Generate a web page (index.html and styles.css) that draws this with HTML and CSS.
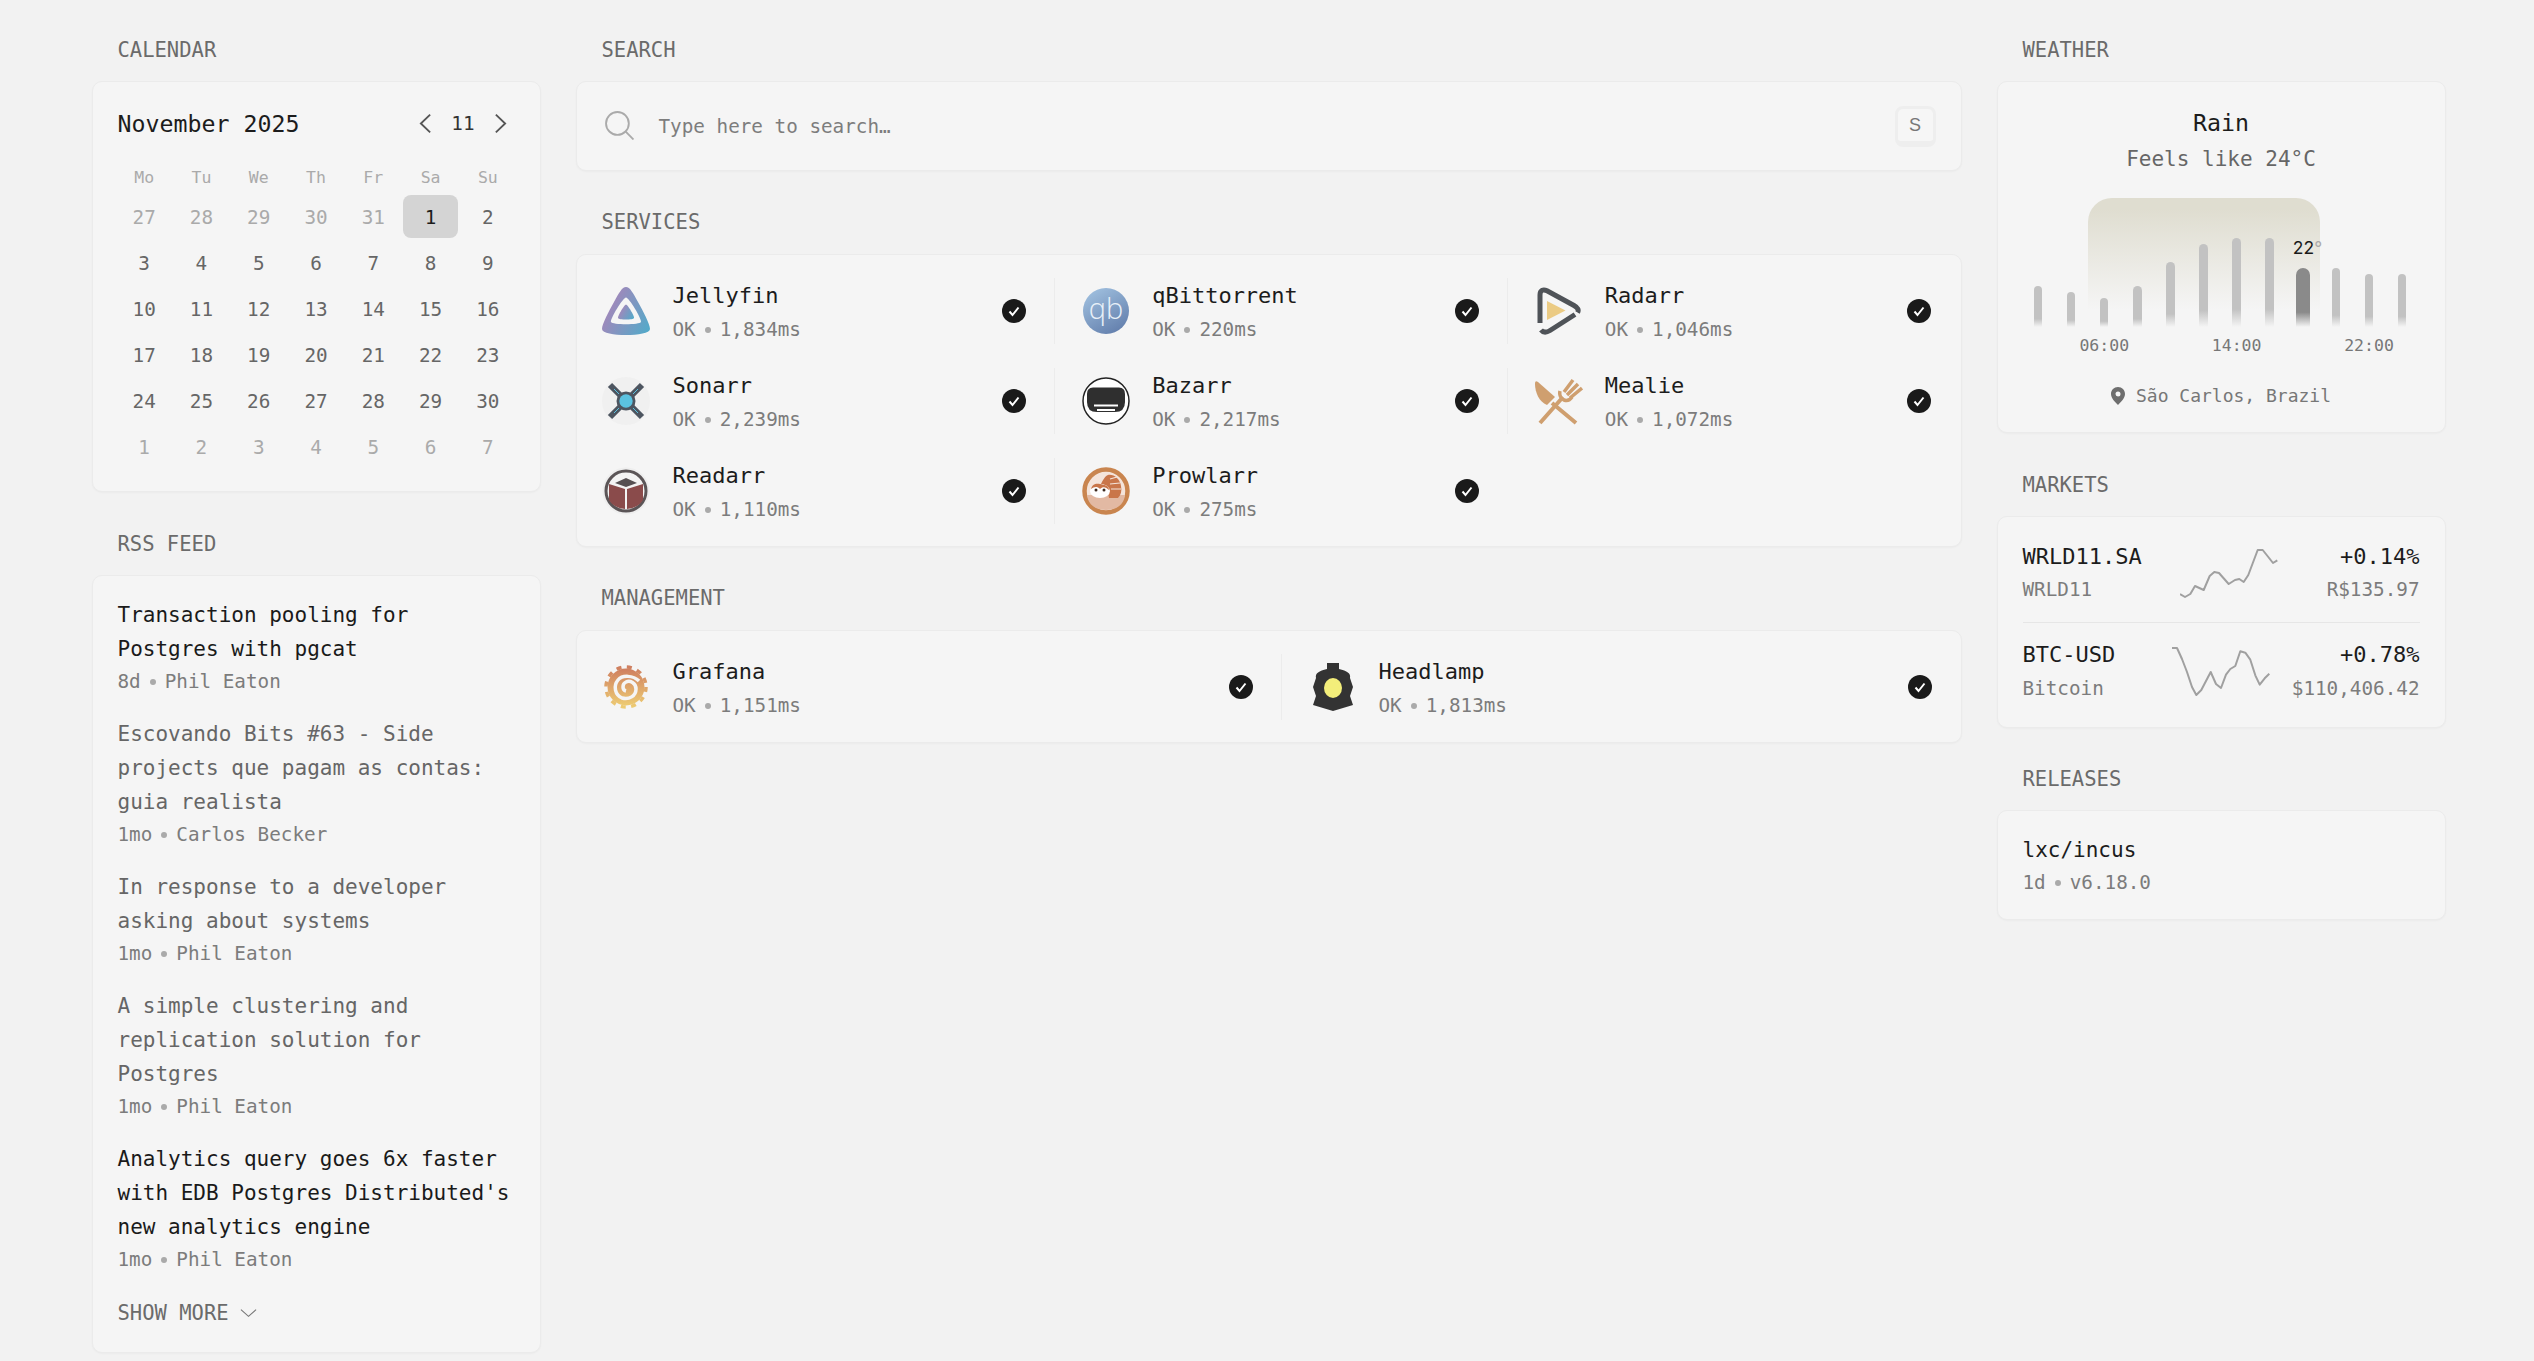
FILE: index.html
```html
<!DOCTYPE html>
<html lang="en">
<head>
    <meta charset="UTF-8">
    <meta name="viewport" content="width=device-width, initial-scale=1.0">
    <title>Dashboard</title>
    <link rel="stylesheet" href="styles.css">
</head>
<body>
    <div class="page">
        <!-- Left column -->
        <div class="column">
            <section class="section">
                <h2 class="section-title">CALENDAR</h2>
                <div class="card calendar">
                    <div class="calendar-header">
                        <span class="calendar-month">November 2025</span>
                        <div class="calendar-nav">
                            <svg class="nav-arrow" viewBox="0 0 14 22"><path d="M12 1.5 2 11l10 9.5"/></svg>
                            <span>11</span>
                            <svg class="nav-arrow" viewBox="0 0 14 22"><path d="M2 1.5 12 11 2 20.500"/></svg>
                        </div>
                    </div>
                    <div class="calendar-grid">
                        <span class="weekday">Mo</span><span class="weekday">Tu</span><span class="weekday">We</span><span class="weekday">Th</span><span class="weekday">Fr</span><span class="weekday">Sa</span><span class="weekday">Su</span>
                        <span class="day muted">27</span><span class="day muted">28</span><span class="day muted">29</span><span class="day muted">30</span><span class="day muted">31</span><span class="day today">1</span><span class="day">2</span>
                        <span class="day">3</span><span class="day">4</span><span class="day">5</span><span class="day">6</span><span class="day">7</span><span class="day">8</span><span class="day">9</span>
                        <span class="day">10</span><span class="day">11</span><span class="day">12</span><span class="day">13</span><span class="day">14</span><span class="day">15</span><span class="day">16</span>
                        <span class="day">17</span><span class="day">18</span><span class="day">19</span><span class="day">20</span><span class="day">21</span><span class="day">22</span><span class="day">23</span>
                        <span class="day">24</span><span class="day">25</span><span class="day">26</span><span class="day">27</span><span class="day">28</span><span class="day">29</span><span class="day">30</span>
                        <span class="day muted">1</span><span class="day muted">2</span><span class="day muted">3</span><span class="day muted">4</span><span class="day muted">5</span><span class="day muted">6</span><span class="day muted">7</span>
                    </div>
                </div>
            </section>

            <section class="section">
                <h2 class="section-title">RSS FEED</h2>
                <div class="card feed">
                    <article class="feed-item">
                        <div class="feed-title unread">Transaction pooling for Postgres with pgcat</div>
                        <div class="meta">8d<span class="dot"></span>Phil Eaton</div>
                    </article>
                    <article class="feed-item">
                        <div class="feed-title">Escovando Bits #63 - Side projects que pagam as contas: guia realista</div>
                        <div class="meta">1mo<span class="dot"></span>Carlos Becker</div>
                    </article>
                    <article class="feed-item">
                        <div class="feed-title">In response to a developer asking about systems</div>
                        <div class="meta">1mo<span class="dot"></span>Phil Eaton</div>
                    </article>
                    <article class="feed-item">
                        <div class="feed-title">A simple clustering and replication solution for Postgres</div>
                        <div class="meta">1mo<span class="dot"></span>Phil Eaton</div>
                    </article>
                    <article class="feed-item">
                        <div class="feed-title unread">Analytics query goes 6x faster with EDB Postgres Distributed's new analytics engine</div>
                        <div class="meta">1mo<span class="dot"></span>Phil Eaton</div>
                    </article>
                    <div class="show-more">SHOW MORE
                        <svg viewBox="0 0 18 10"><path d="M1 1.500 9 8.500l8-7"/></svg>
                    </div>
                </div>
            </section>
        </div>

        <!-- Middle column -->
        <div class="column">
            <section class="section">
                <h2 class="section-title">SEARCH</h2>
                <div class="card search">
                    <svg class="search-icon" viewBox="0 0 28 28"><circle cx="12" cy="12" r="11"/><path d="m20 20 7.500 7.500"/></svg>
                    <span class="search-text">Type here to search…</span>
                    <span class="key">S</span>
                </div>
            </section>

            <section class="section">
                <h2 class="section-title">SERVICES</h2>
                <div class="card services three">
                    <div class="service">
                        <svg class="service-icon" viewBox="0 0 48 48">
                            <defs><linearGradient id="jf" x1="0" y1="0.300" x2="1" y2="0.800"><stop offset="0" stop-color="#ae82b8"/><stop offset="1" stop-color="#55a9c9"/></linearGradient></defs>
                            <path fill="url(#jf)" fill-rule="evenodd" d="M24 0C20 0 17 6 12 15 7 24 0 37 0 42c0 4 12 6 24 6s24-2 24-6c0-5-7-18-12-27C31 6 28 0 24 0ZM24 10.500C27 10.500 40 32 39 35 38 38 10 38 9 35 8 32 21 10.500 24 10.500Z"/>
                            <path fill="url(#jf)" d="M24 17.500c-1.500 0-8.500 11.500-8 13.500 .5 2 15.500 2 16 0 .5-2-6.500-13.500-8-13.500Z"/>
                        </svg>
                        <div class="service-text"><div class="service-name">Jellyfin</div><div class="meta">OK<span class="dot"></span>1,834ms</div></div>
                        <svg class="check" viewBox="0 0 24 24"><circle cx="12" cy="12" r="12"/><path d="m7.500 12.500 3 3.500 6-7.500"/></svg>
                    </div>
                    <div class="service">
                        <svg class="service-icon" viewBox="0 0 48 48">
                            <defs><linearGradient id="qb" x1="0.200" y1="0" x2="0.800" y2="1"><stop offset="0" stop-color="#a0c0df"/><stop offset="1" stop-color="#617dab"/></linearGradient></defs>
                            <circle cx="24" cy="24" r="23" fill="url(#qb)"/>
                            <text class="qb-text" x="24" y="32" text-anchor="middle">qb</text>
                        </svg>
                        <div class="service-text"><div class="service-name">qBittorrent</div><div class="meta">OK<span class="dot"></span>220ms</div></div>
                        <svg class="check" viewBox="0 0 24 24"><circle cx="12" cy="12" r="12"/><path d="m7.500 12.500 3 3.500 6-7.500"/></svg>
                    </div>
                    <div class="service">
                        <svg class="service-icon" viewBox="0 0 48 48">
                            <path fill="#ebcb84" d="M12 14 30.500 23.500 12 33Z"/>
                            <path fill="none" stroke="#4f5358" stroke-width="5" d="M5 36V8C5 3.500 8 1.800 12 3.800L39 18.500C43 20.800 44 23 42.500 25.500"/>
                            <path fill="none" stroke="#4f5358" stroke-width="5" d="M40 27.500 15 43.500C11 46 8 45.500 6 43"/>
                        </svg>
                        <div class="service-text"><div class="service-name">Radarr</div><div class="meta">OK<span class="dot"></span>1,046ms</div></div>
                        <svg class="check" viewBox="0 0 24 24"><circle cx="12" cy="12" r="12"/><path d="m7.500 12.500 3 3.500 6-7.500"/></svg>
                    </div>
                    <div class="service">
                        <svg class="service-icon" viewBox="0 0 48 48">
                            <circle cx="24" cy="24" r="24" fill="#f0f0f0"/>
                            <path stroke="#4d5560" stroke-width="6" d="M8 8 40 40M40 8 8 40"/>
                            <circle cx="24" cy="24" r="9.500" fill="#4d5560"/>
                            <path stroke="#5bc2e0" stroke-width="1" d="M12 12 17 17M36 12 31 17M12 36 17 31M36 36 31 31"/>
                            <circle cx="24" cy="24" r="6.700" fill="#5bc2e0"/>
                        </svg>
                        <div class="service-text"><div class="service-name">Sonarr</div><div class="meta">OK<span class="dot"></span>2,239ms</div></div>
                        <svg class="check" viewBox="0 0 24 24"><circle cx="12" cy="12" r="12"/><path d="m7.500 12.500 3 3.500 6-7.500"/></svg>
                    </div>
                    <div class="service">
                        <svg class="service-icon" viewBox="0 0 48 48">
                            <circle cx="24" cy="24" r="23" fill="#fff" stroke="#222" stroke-width="1.500"/>
                            <path fill="#2f2f2f" d="M11 10.500H37Q43 10.500 43 17V25Q43 35 33 35H15Q5 35 5 25V17Q5 10.500 11 10.500Z"/>
                            <path stroke="#fff" stroke-width="2" d="M12 28.500H36M15 33H33"/>
                        </svg>
                        <div class="service-text"><div class="service-name">Bazarr</div><div class="meta">OK<span class="dot"></span>2,217ms</div></div>
                        <svg class="check" viewBox="0 0 24 24"><circle cx="12" cy="12" r="12"/><path d="m7.500 12.500 3 3.500 6-7.500"/></svg>
                    </div>
                    <div class="service">
                        <svg class="service-icon" viewBox="0 0 48 48">
                            <path fill="#cf9f6f" d="M0 7C0 4 1 3.500 3 5L20 20 12 28C4 25 0 15 0 7Z"/>
                            <path fill="none" stroke="#cf9f6f" stroke-width="4" d="M17 26 41 46M5 46 28 20"/>
                            <path fill="none" stroke="#cf9f6f" stroke-width="3.500" d="M25 14C24 18 26 22 29 23 32 24 35 23 37 20M29 15 38 3M32 18 43 7M35 21 47 11"/>
                        </svg>
                        <div class="service-text"><div class="service-name">Mealie</div><div class="meta">OK<span class="dot"></span>1,072ms</div></div>
                        <svg class="check" viewBox="0 0 24 24"><circle cx="12" cy="12" r="12"/><path d="m7.500 12.500 3 3.500 6-7.500"/></svg>
                    </div>
                    <div class="service">
                        <svg class="service-icon" viewBox="0 0 48 48">
                            <circle cx="24" cy="24" r="23.500" fill="#eeeeee"/>
                            <circle cx="24" cy="24" r="20" fill="#f3f3f3" stroke="#5b5557" stroke-width="3"/>
                            <path fill="#565052" d="M13 16 24 11 35 16 24 20Z"/>
                            <path fill="#8a4b4b" d="M7 17 23 22V42C15 41 10 38 7 33ZM41 17 25 22V42C33 41 38 38 41 33Z"/>
                        </svg>
                        <div class="service-text"><div class="service-name">Readarr</div><div class="meta">OK<span class="dot"></span>1,110ms</div></div>
                        <svg class="check" viewBox="0 0 24 24"><circle cx="12" cy="12" r="12"/><path d="m7.500 12.500 3 3.500 6-7.500"/></svg>
                    </div>
                    <div class="service">
                        <svg class="service-icon" viewBox="0 0 48 48">
                            <circle cx="24" cy="24" r="21.500" fill="#f4e4da" stroke="#c9854f" stroke-width="4.500"/>
                            <path fill="#e2b9a3" d="M5 28H43C42 38 34 43 24 43S6 38 5 28Z"/>
                            <path fill="#c9764a" d="M26 8C32 7 38 12 39 19 40 24 39 28 36 31H27L25 19 19 17C21 13 23 9 26 8Z"/>
                            <path stroke="#f4e4da" stroke-width="1.200" d="M28 12 35 10M28 17 38 16M29 22 39 22"/>
                            <ellipse cx="18" cy="24" rx="10" ry="7" fill="#fff"/>
                            <path fill="#c9764a" d="M9 22C10 17 14 16 18 17S27 18 27 23C24 20 21 19 18 22 15 19 12 20 9 22Z"/>
                            <circle cx="14" cy="23" r="1.500" fill="#3d2a1f"/>
                            <circle cx="22" cy="23" r="1.500" fill="#3d2a1f"/>
                        </svg>
                        <div class="service-text"><div class="service-name">Prowlarr</div><div class="meta">OK<span class="dot"></span>275ms</div></div>
                        <svg class="check" viewBox="0 0 24 24"><circle cx="12" cy="12" r="12"/><path d="m7.500 12.500 3 3.500 6-7.500"/></svg>
                    </div>
                </div>
            </section>

            <section class="section">
                <h2 class="section-title">MANAGEMENT</h2>
                <div class="card services two">
                    <div class="service">
                        <svg class="service-icon" viewBox="0 0 48 48">
                            <defs><linearGradient id="gf" x1="0" y1="0" x2="0" y2="1"><stop offset="0" stop-color="#cf7f60"/><stop offset="1" stop-color="#edcb73"/></linearGradient></defs>
                            <circle cx="24" cy="24" r="18.500" fill="url(#gf)"/>
                            <circle cx="24" cy="24" r="20" fill="none" stroke="url(#gf)" stroke-width="3.500" stroke-dasharray="5 5.500"/>
                            <path fill="none" stroke="#f5f5f5" stroke-width="3.500" d="M37 18C31 12 20 12 16 17 11 23 13 32 20 35 27 37 34 33 34 26 34 20 28 17 24 19 20 21 20 27 24 28"/>
                        </svg>
                        <div class="service-text"><div class="service-name">Grafana</div><div class="meta">OK<span class="dot"></span>1,151ms</div></div>
                        <svg class="check" viewBox="0 0 24 24"><circle cx="12" cy="12" r="12"/><path d="m7.500 12.500 3 3.500 6-7.500"/></svg>
                    </div>
                    <div class="service">
                        <svg class="service-icon" viewBox="0 0 48 48">
                            <path fill="#333333" d="M18 0H30V6C38 8 42 10 41 15L44 24 41 33 44 42 24 48 4 42 7 33 4 24 7 15C6 10 10 8 18 6Z"/>
                            <ellipse cx="24" cy="25" rx="9" ry="10" fill="#f3ee7a"/>
                        </svg>
                        <div class="service-text"><div class="service-name">Headlamp</div><div class="meta">OK<span class="dot"></span>1,813ms</div></div>
                        <svg class="check" viewBox="0 0 24 24"><circle cx="12" cy="12" r="12"/><path d="m7.500 12.500 3 3.500 6-7.500"/></svg>
                    </div>
                </div>
            </section>
        </div>

        <!-- Right column -->
        <div class="column">
            <section class="section">
                <h2 class="section-title">WEATHER</h2>
                <div class="card weather">
                    <div class="weather-main">Rain</div>
                    <div class="weather-feels">Feels like 24°C</div>
                    <div class="chart">
                        <div class="daylight"></div>
                        <div class="bar-slot"><div class="bar h41"></div></div>
                        <div class="bar-slot"><div class="bar h35"></div></div>
                        <div class="bar-slot"><div class="bar h29"></div></div>
                        <div class="bar-slot"><div class="bar h41"></div></div>
                        <div class="bar-slot"><div class="bar h65"></div></div>
                        <div class="bar-slot"><div class="bar h83"></div></div>
                        <div class="bar-slot"><div class="bar h89"></div></div>
                        <div class="bar-slot"><div class="bar h89"></div></div>
                        <div class="bar-slot"><div class="bar now h59"><span class="bar-label">22<span class="degree">°</span></span></div></div>
                        <div class="bar-slot"><div class="bar h59"></div></div>
                        <div class="bar-slot"><div class="bar h53"></div></div>
                        <div class="bar-slot"><div class="bar h53"></div></div>
                    </div>
                    <div class="hours">
                        <span class="hour-a">06:00</span>
                        <span class="hour-b">14:00</span>
                        <span class="hour-c">22:00</span>
                    </div>
                    <div class="location">
                        <svg viewBox="0 0 14 18"><path fill-rule="evenodd" d="M7 0C3 0 0 3 0 7C0 11 4 15 7 18 10 15 14 11 14 7 14 3 11 0 7 0ZM7 4.500A2.500 2.500 0 1 1 7 9.500 2.500 2.500 0 0 1 7 4.500Z"/></svg>
                        São Carlos, Brazil
                    </div>
                </div>
            </section>

            <section class="section markets-section">
                <h2 class="section-title">MARKETS</h2>
                <div class="card markets">
                    <div class="market">
                        <div class="market-side">
                            <div class="market-name">WRLD11.SA</div>
                            <div class="meta">WRLD11</div>
                        </div>
                        <svg class="spark spark-first" viewBox="0 0 98 49"><polyline points="0,45 5,48 10.300,45 15,37 23.700,41 29.700,27 34.300,23 39,24 48.700,35 55,31 59.300,30 63.700,33 68.300,26 77.700,1 82.700,1 88.300,8 93,14 97.300,11.300"/></svg>
                        <div class="market-side right">
                            <div class="market-name">+0.14%</div>
                            <div class="meta">R$135.97</div>
                        </div>
                    </div>
                    <div class="market">
                        <div class="market-side">
                            <div class="market-name">BTC-USD</div>
                            <div class="meta">Bitcoin</div>
                        </div>
                        <svg class="spark" viewBox="0 0 98 49"><polyline points="0,1 5,1 10,12 15,25 20,40 24.300,48 29.300,43 38.700,25 44,37 49,41 54,27.700 58.300,22 63.300,19 68.300,4.300 73.300,5.700 78.300,12.700 83.300,28.300 87.700,37.700 92.700,31.300 97.300,26.700"/></svg>
                        <div class="market-side right">
                            <div class="market-name">+0.78%</div>
                            <div class="meta">$110,406.42</div>
                        </div>
                    </div>
                </div>
            </section>

            <section class="section">
                <h2 class="section-title">RELEASES</h2>
                <div class="card release">
                    <div class="release-name">lxc/incus</div>
                    <div class="meta">1d<span class="dot"></span>v6.18.0</div>
                </div>
            </section>
        </div>
    </div>
</body>
</html>
```
FILE: styles.css
```css
* {
    box-sizing: border-box;
    margin: 0;
    padding: 0;
}

body {
    font-family: "DejaVu Sans Mono", "Liberation Mono", monospace;
    font-size: 21px;
    background-color: #f2f2f2;
    color: #1c1c1c;
}

.page {
    display: grid;
    grid-template-columns: 449px 1fr 449px;
    column-gap: 35px;
    padding: 37.5px 88.5px 0 91.5px;
}

.section {
    margin-bottom: 39.5px;
}

.section-title {
    font-size: 20.500px;
    font-weight: 400;
    line-height: 24px;
    color: #6b6b6b;
    padding-left: 26px;
    margin-bottom: 19.5px;
}

.card {
    background-color: #f5f5f5;
    border: 1px solid #ebebeb;
    border-radius: 10px;
    box-shadow: 0 1px 2px rgba(0,0,0,0.03);
}

.meta {
    font-size: 19.300px;
    line-height: 32px;
    color: #7c7c7c;
}

.dot {
    display: inline-block;
    width: 6px;
    height: 6px;
    margin: 0 9px;
    border-radius: 50%;
    background-color: #aaa;
    vertical-align: 3px;
}

/* Calendar */
.calendar {
    padding: 23px 23px 23px;
}

.calendar-header {
    display: flex;
    justify-content: space-between;
    align-items: center;
    height: 36px;
    margin-bottom: 24px;
}

.calendar-month {
    font-size: 23.250px;
    padding-left: 2px;
}

.calendar-nav {
    display: flex;
    align-items: center;
    gap: 19px;
    padding-right: 10px;
    font-size: 19.300px;
    color: #333;
}

.nav-arrow {
    width: 13px;
    height: 21px;
    fill: none;
    stroke: #555;
    stroke-width: 2;
}

.calendar-grid {
    display: grid;
    grid-template-columns: repeat(7, 1fr);
    grid-template-rows: 27px;
    grid-auto-rows: 43px;
    row-gap: 3px;
    text-align: center;
}

.weekday {
    font-size: 16.500px;
    line-height: 25px;
    color: #aaa;
}

.day {
    font-size: 19.300px;
    line-height: 41px;
    padding-top: 2px;
    color: #666;
    margin: 0 1.5px;
    border-radius: 8px;
}

.day.muted {
    color: #aaa;
}

.day.today {
    background-color: #d4d4d4;
    color: #1c1c1c;
}

/* Feed */
.feed {
    padding: 22px 25px 0;
    height: 778px;
}

.feed-item {
    margin-bottom: 19px;
}

.feed-title {
    line-height: 34px;
    color: #666;
}

.feed-title.unread {
    color: #1a1a1a;
}

.show-more {
    display: flex;
    align-items: center;
    gap: 11px;
    height: 36px;
    font-size: 20.500px;
    color: #6b6b6b;
}

.show-more svg {
    width: 17px;
    height: 10px;
    fill: none;
    stroke: #777;
    stroke-width: 1.200;
}

/* Search */
.search {
    display: flex;
    align-items: center;
    height: 89.5px;
    padding: 0 25px 0 28px;
}

.search-icon {
    width: 29px;
    height: 29px;
    fill: none;
    stroke: #aaa;
    stroke-width: 1.800;
    margin-right: 25px;
}

.search-text {
    flex: 1;
    padding-top: 2px;
    font-size: 19.300px;
    color: #7d7d7d;
}

.key {
    width: 41px;
    height: 41px;
    margin-top: 2px;
    line-height: 32px;
    text-align: center;
    font-family: "Liberation Sans", sans-serif;
    font-size: 18px;
    color: #777;
    background-color: #f6f6f6;
    border: 3px solid #eeeeee;
    border-bottom-width: 6px;
    border-radius: 8px;
}

/* Services */
.services {
    display: grid;
    row-gap: 24px;
    padding: 23px 1px 22px 25px;
}

.services.three {
    grid-template-columns: repeat(3, 1fr);
}

.services.two {
    grid-template-columns: repeat(2, 1fr);
}

.service {
    display: flex;
    align-items: center;
    height: 66px;
    padding: 0 28px 0 27px;
    border-left: 1px solid #ececec;
}

.three .service:nth-child(3n+1),
.two .service:nth-child(2n+1) {
    padding-left: 0;
    border-left: none;
}

.service-icon {
    width: 48px;
    height: 48px;
    margin-right: 22px;
    flex-shrink: 0;
}

.three .service:nth-child(3n+1) .service-icon,
.two .service:nth-child(2n+1) .service-icon {
    margin-right: 23px;
}

.qb-text {
    font-family: "Open Sans", sans-serif;
    font-size: 29px;
    font-weight: 300;
    fill: #e8f0f8;
}

.service-text {
    flex: 1;
    padding-top: 2px;
}

.service-name {
    font-size: 22px;
    line-height: 35px;
}

.service-text .meta {
    line-height: 33px;
}

.check {
    width: 24px;
    height: 24px;
    flex-shrink: 0;
}

.check circle {
    fill: #1a1a1a;
}

.check path {
    fill: none;
    stroke: #fff;
    stroke-width: 2;
}

/* Weather */
.weather {
    padding: 23px 24px 0;
    height: 352px;
}

.weather-main {
    font-size: 23.250px;
    line-height: 36px;
    text-align: center;
}

.weather-feels {
    line-height: 36px;
    color: #666;
    text-align: center;
}

.chart {
    position: relative;
    display: grid;
    grid-template-columns: repeat(12, 33.1px);
    height: 129px;
    margin-top: 21px;
}

/* Band behind the bars, from the third hour to the ninth */
.daylight {
    position: absolute;
    top: 0;
    left: 66.2px;
    width: 232px;
    height: 112px;
    border-radius: 24px 24px 0 0;
    background: linear-gradient(#dfddd0 10%, rgba(223,221,208,0));
}

.bar-slot {
    display: flex;
    justify-content: center;
    align-items: flex-end;
}

.bar {
    position: relative;
    width: 8.500px;
    border-radius: 5px 5px 0 0;
    background: linear-gradient(#c2c2c2 80%, rgba(194,194,194,0));
}

.bar.now {
    width: 14px;
    border-radius: 7px 7px 0 0;
    background: linear-gradient(#8a8a8a 75%, rgba(138,138,138,0));
}

.h29 { height: 29px; }
.h35 { height: 35px; }
.h41 { height: 41px; }
.h53 { height: 53px; }
.h59 { height: 59px; }
.h65 { height: 65px; }
.h83 { height: 83px; }
.h89 { height: 89px; }

.bar-label {
    position: absolute;
    bottom: 100%;
    left: -3px;
    font-family: Inter, "Liberation Sans", sans-serif;
    font-size: 17.500px;
    line-height: 40px;
    white-space: nowrap;
    color: #1a1a1a;
}

.degree {
    color: #aaa;
}

.hours {
    display: grid;
    grid-template-columns: repeat(12, 33.1px);
    font-size: 16.500px;
    line-height: 37px;
    color: #777;
    text-align: center;
}

.hours span {
    justify-self: center;
    white-space: nowrap;
}

.hour-a { grid-column: 3; }
.hour-b { grid-column: 7; }
.hour-c { grid-column: 11; }

.location {
    display: flex;
    justify-content: center;
    align-items: center;
    gap: 11px;
    margin-top: 21px;
    font-size: 18px;
    color: #777;
}

.location svg {
    width: 14px;
    height: 18px;
    fill: #6e6e6e;
}

/* Markets */
.markets-section {
    margin-bottom: 38.5px;
}

.markets {
    padding: 7px 25px 6px;
}

.market {
    display: flex;
    align-items: center;
    padding: 16px 0;
}

.market + .market {
    padding-top: 15px;
    border-top: 1px solid #e6e6e6;
}

.market + .market .meta {
    margin-top: 1px;
}

.market-side {
    flex: 1;
    white-space: nowrap;
}

.market-side.right {
    text-align: right;
}

.market-name {
    font-size: 22px;
    line-height: 34px;
}

.spark {
    width: 98px;
    height: 49px;
    flex-shrink: 0;
    fill: none;
    stroke: #a0a0a0;
    stroke-width: 2;
    stroke-linejoin: round;
}

.spark-first {
    margin-left: 16px;
}

/* Releases */
.release {
    padding: 22px 25px 20px;
}

.release-name {
    line-height: 34px;
}
```
